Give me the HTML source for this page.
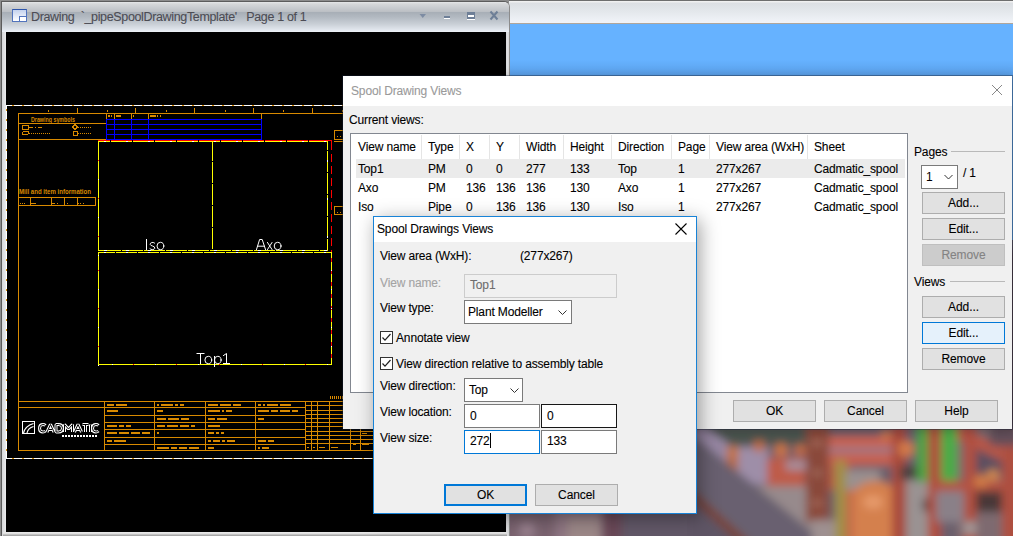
<!DOCTYPE html>
<html><head><meta charset="utf-8">
<style>
html,body{margin:0;padding:0}
body{width:1013px;height:536px;overflow:hidden;position:relative;background:#66b2ff;font-family:"Liberation Sans",sans-serif;font-size:12px;color:#000}
.a{position:absolute;box-sizing:border-box}
.t{position:absolute;white-space:pre;line-height:15px;letter-spacing:-0.15px;-webkit-text-stroke:0.1px currentColor}
.btn{position:absolute;box-sizing:border-box;background:#e1e1e1;border:1px solid #adadad;text-align:center;line-height:21px;white-space:pre;letter-spacing:-0.1px;-webkit-text-stroke:0.1px currentColor}
.tb{position:absolute;box-sizing:border-box;background:#fff;border:1px solid #7a7a7a;white-space:pre;line-height:20px;padding-left:5px}
</style></head><body>

<!-- desktop top strip -->
<div class="a" style="left:509px;top:0;width:504px;height:24px;background:linear-gradient(#6e6e6e 0,#6e6e6e 1px,#f0f0f0 1px,#f0f0f0 2px,#dcdfe3 3px,#e4e8ec 12px,#f0f3f8 22px,#f0f3f8 23px,#b0a69c 23px,#b0a69c 24px)"></div>
<!-- blue shadow above main dialog -->
<div class="a" style="left:509px;top:60px;width:504px;height:16px;background:linear-gradient(rgba(0,0,60,0),rgba(0,20,60,0.12))"></div>

<!-- 3D render -->
<svg id="render" class="a" style="left:509px;top:240px" width="504" height="296" viewBox="509 240 504 296"><defs><filter id="bl" filterUnits="userSpaceOnUse" x="470" y="210" width="600" height="380"><feGaussianBlur stdDeviation="4"/></filter></defs><g filter="url(#bl)">
<rect x="480" y="220" width="580" height="360" fill="#6a5e6c"/>
<rect x="1000" y="250" width="40" height="180" fill="#5a4248"/>
<rect x="500" y="505" width="55" height="55" fill="#7a6470"/>
<circle cx="527" cy="530" r="8" fill="#98808e"/>
<rect x="555" y="505" width="47" height="55" fill="#8e7682"/>
<rect x="568" y="518" width="32" height="42" fill="#9c8888"/>
<rect x="602" y="505" width="20" height="55" fill="#6a4a58"/>
<rect x="622" y="505" width="78" height="55" fill="#625868"/>
<rect x="690" y="425" width="140" height="21" fill="#4b5550"/>
<polygon points="690,425 703,425 730,445 730,475 690,450" fill="#9686a2"/>
<rect x="734" y="447" width="34" height="37" fill="#9e8ea8"/>
<rect x="727" y="446" width="11" height="30" fill="#b86a40"/>
<circle cx="733" cy="452" r="6" fill="#c47446"/>
<circle cx="759" cy="446" r="6" fill="#c06a40"/>
<circle cx="781" cy="450" r="7" fill="#cc7444"/>
<circle cx="800" cy="450" r="6" fill="#c46c44"/>
<rect x="767" y="458" width="38" height="28" fill="#be5c4a"/>
<rect x="786" y="461" width="20" height="9" fill="#a4909e"/>
<polygon points="740,486 812,486 836,560 812,560" fill="#978a8c"/>
<polygon points="690,433 847,560 766,560 690,491" fill="#696070"/>
<polygon points="690,488 770,560 758,560 690,498" fill="#7a4232"/>
<polygon points="690,498 758,560 690,560" fill="#5f5565"/>
<rect x="806" y="425" width="23" height="97" fill="#8a4a3a"/>
<rect x="812" y="440" width="10" height="6" fill="#a06858"/>
<rect x="812" y="470" width="10" height="6" fill="#a06858"/>
<rect x="812" y="500" width="10" height="6" fill="#a06858"/>
<rect x="812" y="520" width="30" height="40" fill="#9e9090"/>
<rect x="829" y="436" width="63" height="11" fill="#c86050"/>
<rect x="829" y="447" width="63" height="6" fill="#9a7a88"/>
<rect x="829" y="453" width="63" height="12" fill="#c86050"/>
<rect x="829" y="465" width="21" height="25" fill="#b85a48"/>
<rect x="835" y="460" width="11" height="100" fill="#a09046"/>
<rect x="846" y="470" width="34" height="22" fill="#9a9090"/>
<rect x="846" y="490" width="10" height="70" fill="#c46848"/>
<rect x="853" y="494" width="45" height="66" fill="#d4804e"/>
<ellipse cx="875.5" cy="496" rx="22.5" ry="15" fill="#d4804e"/>
<ellipse cx="873" cy="502" rx="10" ry="7" fill="#e69a6a"/>
<rect x="892" y="425" width="14" height="135" fill="#a84a3a"/>
<circle cx="886" cy="435" r="5" fill="#cc7848"/>
<circle cx="906" cy="449" r="8" fill="#d47a48"/>
<rect x="900" y="466" width="18" height="14" fill="#4a4040"/>
<rect x="906" y="480" width="30" height="80" fill="#9a9292"/>
<circle cx="930" cy="505" r="8" fill="#4e4444"/>
<rect x="917" y="425" width="11" height="57" fill="#48a444"/>
<rect x="941" y="425" width="16" height="57" fill="#4aac46"/>
<rect x="928" y="425" width="13" height="135" fill="#b04e3e"/>
<rect x="957" y="425" width="83" height="135" fill="#7e6a70"/>
<rect x="975" y="438" width="27" height="38" fill="#5c5060"/>
<polygon points="957,425 1040,466 1040,480 957,439" fill="#b85646"/>
<rect x="964" y="425" width="12" height="135" fill="#b05040"/>
<rect x="936" y="481" width="104" height="10" fill="#b45242"/>
<rect x="976" y="491" width="26" height="21" fill="#4a3838"/>
<rect x="936" y="491" width="28" height="31" fill="#8a8088"/>
<circle cx="970" cy="528" r="7" fill="#a09898"/>
<circle cx="981" cy="481" r="7" fill="#d07c44"/>
<circle cx="993" cy="475" r="6" fill="#d48a4c"/>
<rect x="1002" y="445" width="38" height="115" fill="#ae5040"/>
<rect x="990" y="425" width="50" height="21" fill="#64505a"/>
</g></svg>

<!-- drawing window -->
<div class="a" style="left:0;top:0;width:509px;height:536px;background:#8c8c8c"></div>
<div id="dw" class="a" style="left:1px;top:1px;width:509px;height:540px;border:1px solid #5c5c5c;border-right-color:#8c8c8c;border-top-right-radius:6px;background:linear-gradient(90deg,#d6d7d9,#e9eaec 4px,#d3d5d8 5px,#d3d5d8 503px,#e0e1e3 506px,#c0c0c0 508px)">
  <div class="a" style="left:0;top:0;width:507px;height:30px;border-top-right-radius:5px;background:linear-gradient(#e6e7e8 0,#d5d7d9 2px,#bcc0c5 9.5px,#a8afb7 10.5px,#b2b9c1 15px,#c9cfd6 22px,#e2e7ee 28px,#edf1f6 30px)"></div>
</div>
<div class="a" style="left:3px;top:532px;width:504px;height:4px;background:linear-gradient(#ebebeb,#dcdcdc 2px,#a8a8a8 3px,#a8a8a8 4px)"></div>
<!-- title icon -->
<div class="a" style="left:12px;top:9px;width:15px;height:13px;border:1px solid #5274bd;border-top-color:#2d55aa;background:linear-gradient(#c4d2ee,#ffffff)"></div>
<div class="a" style="left:19px;top:16px;width:8px;height:6px;border:1px solid #5274bd;background:#fff"></div>
<div class="t" style="left:31px;top:10px;color:#4c4c54;font-size:12.5px;letter-spacing:-0.35px">Drawing  `_pipeSpoolDrawingTemplate'   Page 1 of 1</div>
<!-- title buttons -->
<svg class="a" style="left:410px;top:5px" width="100" height="25" viewBox="410 5 100 25">
  <path d="M419.5 14 L426 14 L422.75 18 Z" fill="#7d8ca3"/>
  <rect x="444" y="16" width="6" height="2" fill="#6e7f97"/><rect x="444" y="18" width="6" height="1" fill="#fff"/>
  <rect x="467" y="12" width="8" height="7" fill="#6e7f97"/><rect x="468" y="15" width="6" height="2" fill="#fff"/><rect x="467" y="19" width="8" height="1" fill="#fff"/>
  <path d="M490.5 11.5 L497.5 19.5 M497.5 11.5 L490.5 19.5" stroke="#6e7f97" stroke-width="2"/>
</svg>
<!-- canvas -->
<div class="a" style="left:6px;top:32px;width:500px;height:500px;background:#000"></div>
<svg id="cad" class="a" style="left:6px;top:32px" width="500" height="500" viewBox="6 32 500 500" shape-rendering="crispEdges">
<rect x="6" y="105" width="500" height="1" fill="#ffffff"/>
<rect x="12" y="105" width="2" height="1" fill="#d98a00"/>
<rect x="22" y="105" width="2" height="1" fill="#d98a00"/>
<rect x="32" y="105" width="2" height="1" fill="#d98a00"/>
<rect x="42" y="105" width="2" height="1" fill="#d98a00"/>
<rect x="52" y="105" width="2" height="1" fill="#d98a00"/>
<rect x="62" y="105" width="2" height="1" fill="#d98a00"/>
<rect x="72" y="105" width="2" height="1" fill="#d98a00"/>
<rect x="82" y="105" width="2" height="1" fill="#d98a00"/>
<rect x="92" y="105" width="2" height="1" fill="#d98a00"/>
<rect x="102" y="105" width="2" height="1" fill="#d98a00"/>
<rect x="112" y="105" width="2" height="1" fill="#d98a00"/>
<rect x="122" y="105" width="2" height="1" fill="#d98a00"/>
<rect x="132" y="105" width="2" height="1" fill="#d98a00"/>
<rect x="142" y="105" width="2" height="1" fill="#d98a00"/>
<rect x="152" y="105" width="2" height="1" fill="#d98a00"/>
<rect x="162" y="105" width="2" height="1" fill="#d98a00"/>
<rect x="172" y="105" width="2" height="1" fill="#d98a00"/>
<rect x="182" y="105" width="2" height="1" fill="#d98a00"/>
<rect x="192" y="105" width="2" height="1" fill="#d98a00"/>
<rect x="202" y="105" width="2" height="1" fill="#d98a00"/>
<rect x="212" y="105" width="2" height="1" fill="#d98a00"/>
<rect x="222" y="105" width="2" height="1" fill="#d98a00"/>
<rect x="232" y="105" width="2" height="1" fill="#d98a00"/>
<rect x="242" y="105" width="2" height="1" fill="#d98a00"/>
<rect x="252" y="105" width="2" height="1" fill="#d98a00"/>
<rect x="262" y="105" width="2" height="1" fill="#d98a00"/>
<rect x="272" y="105" width="2" height="1" fill="#d98a00"/>
<rect x="282" y="105" width="2" height="1" fill="#d98a00"/>
<rect x="292" y="105" width="2" height="1" fill="#d98a00"/>
<rect x="302" y="105" width="2" height="1" fill="#d98a00"/>
<rect x="312" y="105" width="2" height="1" fill="#d98a00"/>
<rect x="322" y="105" width="2" height="1" fill="#d98a00"/>
<rect x="332" y="105" width="2" height="1" fill="#d98a00"/>
<rect x="342" y="105" width="2" height="1" fill="#d98a00"/>
<rect x="352" y="105" width="2" height="1" fill="#d98a00"/>
<rect x="362" y="105" width="2" height="1" fill="#d98a00"/>
<rect x="372" y="105" width="2" height="1" fill="#d98a00"/>
<rect x="382" y="105" width="2" height="1" fill="#d98a00"/>
<rect x="392" y="105" width="2" height="1" fill="#d98a00"/>
<rect x="402" y="105" width="2" height="1" fill="#d98a00"/>
<rect x="412" y="105" width="2" height="1" fill="#d98a00"/>
<rect x="422" y="105" width="2" height="1" fill="#d98a00"/>
<rect x="432" y="105" width="2" height="1" fill="#d98a00"/>
<rect x="442" y="105" width="2" height="1" fill="#d98a00"/>
<rect x="452" y="105" width="2" height="1" fill="#d98a00"/>
<rect x="462" y="105" width="2" height="1" fill="#d98a00"/>
<rect x="472" y="105" width="2" height="1" fill="#d98a00"/>
<rect x="482" y="105" width="2" height="1" fill="#d98a00"/>
<rect x="492" y="105" width="2" height="1" fill="#d98a00"/>
<rect x="502" y="105" width="2" height="1" fill="#d98a00"/>
<rect x="6" y="458" width="500" height="1" fill="#ffffff"/>
<rect x="12" y="458" width="2" height="1" fill="#d98a00"/>
<rect x="22" y="458" width="2" height="1" fill="#d98a00"/>
<rect x="32" y="458" width="2" height="1" fill="#d98a00"/>
<rect x="42" y="458" width="2" height="1" fill="#d98a00"/>
<rect x="52" y="458" width="2" height="1" fill="#d98a00"/>
<rect x="62" y="458" width="2" height="1" fill="#d98a00"/>
<rect x="72" y="458" width="2" height="1" fill="#d98a00"/>
<rect x="82" y="458" width="2" height="1" fill="#d98a00"/>
<rect x="92" y="458" width="2" height="1" fill="#d98a00"/>
<rect x="102" y="458" width="2" height="1" fill="#d98a00"/>
<rect x="112" y="458" width="2" height="1" fill="#d98a00"/>
<rect x="122" y="458" width="2" height="1" fill="#d98a00"/>
<rect x="132" y="458" width="2" height="1" fill="#d98a00"/>
<rect x="142" y="458" width="2" height="1" fill="#d98a00"/>
<rect x="152" y="458" width="2" height="1" fill="#d98a00"/>
<rect x="162" y="458" width="2" height="1" fill="#d98a00"/>
<rect x="172" y="458" width="2" height="1" fill="#d98a00"/>
<rect x="182" y="458" width="2" height="1" fill="#d98a00"/>
<rect x="192" y="458" width="2" height="1" fill="#d98a00"/>
<rect x="202" y="458" width="2" height="1" fill="#d98a00"/>
<rect x="212" y="458" width="2" height="1" fill="#d98a00"/>
<rect x="222" y="458" width="2" height="1" fill="#d98a00"/>
<rect x="232" y="458" width="2" height="1" fill="#d98a00"/>
<rect x="242" y="458" width="2" height="1" fill="#d98a00"/>
<rect x="252" y="458" width="2" height="1" fill="#d98a00"/>
<rect x="262" y="458" width="2" height="1" fill="#d98a00"/>
<rect x="272" y="458" width="2" height="1" fill="#d98a00"/>
<rect x="282" y="458" width="2" height="1" fill="#d98a00"/>
<rect x="292" y="458" width="2" height="1" fill="#d98a00"/>
<rect x="302" y="458" width="2" height="1" fill="#d98a00"/>
<rect x="312" y="458" width="2" height="1" fill="#d98a00"/>
<rect x="322" y="458" width="2" height="1" fill="#d98a00"/>
<rect x="332" y="458" width="2" height="1" fill="#d98a00"/>
<rect x="342" y="458" width="2" height="1" fill="#d98a00"/>
<rect x="352" y="458" width="2" height="1" fill="#d98a00"/>
<rect x="362" y="458" width="2" height="1" fill="#d98a00"/>
<rect x="372" y="458" width="2" height="1" fill="#d98a00"/>
<rect x="382" y="458" width="2" height="1" fill="#d98a00"/>
<rect x="392" y="458" width="2" height="1" fill="#d98a00"/>
<rect x="402" y="458" width="2" height="1" fill="#d98a00"/>
<rect x="412" y="458" width="2" height="1" fill="#d98a00"/>
<rect x="422" y="458" width="2" height="1" fill="#d98a00"/>
<rect x="432" y="458" width="2" height="1" fill="#d98a00"/>
<rect x="442" y="458" width="2" height="1" fill="#d98a00"/>
<rect x="452" y="458" width="2" height="1" fill="#d98a00"/>
<rect x="462" y="458" width="2" height="1" fill="#d98a00"/>
<rect x="472" y="458" width="2" height="1" fill="#d98a00"/>
<rect x="482" y="458" width="2" height="1" fill="#d98a00"/>
<rect x="492" y="458" width="2" height="1" fill="#d98a00"/>
<rect x="502" y="458" width="2" height="1" fill="#d98a00"/>
<rect x="6" y="105" width="1" height="354" fill="#ffffff"/>
<rect x="6" y="109" width="1" height="2" fill="#d98a00"/>
<rect x="6" y="119" width="1" height="2" fill="#d98a00"/>
<rect x="6" y="129" width="1" height="2" fill="#d98a00"/>
<rect x="6" y="139" width="1" height="2" fill="#d98a00"/>
<rect x="6" y="149" width="1" height="2" fill="#d98a00"/>
<rect x="6" y="159" width="1" height="2" fill="#d98a00"/>
<rect x="6" y="169" width="1" height="2" fill="#d98a00"/>
<rect x="6" y="179" width="1" height="2" fill="#d98a00"/>
<rect x="6" y="189" width="1" height="2" fill="#d98a00"/>
<rect x="6" y="199" width="1" height="2" fill="#d98a00"/>
<rect x="6" y="209" width="1" height="2" fill="#d98a00"/>
<rect x="6" y="219" width="1" height="2" fill="#d98a00"/>
<rect x="6" y="229" width="1" height="2" fill="#d98a00"/>
<rect x="6" y="239" width="1" height="2" fill="#d98a00"/>
<rect x="6" y="249" width="1" height="2" fill="#d98a00"/>
<rect x="6" y="259" width="1" height="2" fill="#d98a00"/>
<rect x="6" y="269" width="1" height="2" fill="#d98a00"/>
<rect x="6" y="279" width="1" height="2" fill="#d98a00"/>
<rect x="6" y="289" width="1" height="2" fill="#d98a00"/>
<rect x="6" y="299" width="1" height="2" fill="#d98a00"/>
<rect x="6" y="309" width="1" height="2" fill="#d98a00"/>
<rect x="6" y="319" width="1" height="2" fill="#d98a00"/>
<rect x="6" y="329" width="1" height="2" fill="#d98a00"/>
<rect x="6" y="339" width="1" height="2" fill="#d98a00"/>
<rect x="6" y="349" width="1" height="2" fill="#d98a00"/>
<rect x="6" y="359" width="1" height="2" fill="#d98a00"/>
<rect x="6" y="369" width="1" height="2" fill="#d98a00"/>
<rect x="6" y="379" width="1" height="2" fill="#d98a00"/>
<rect x="6" y="389" width="1" height="2" fill="#d98a00"/>
<rect x="6" y="399" width="1" height="2" fill="#d98a00"/>
<rect x="6" y="409" width="1" height="2" fill="#d98a00"/>
<rect x="6" y="419" width="1" height="2" fill="#d98a00"/>
<rect x="6" y="429" width="1" height="2" fill="#d98a00"/>
<rect x="6" y="439" width="1" height="2" fill="#d98a00"/>
<rect x="6" y="449" width="1" height="2" fill="#d98a00"/>
<rect x="18" y="113" width="362" height="1" fill="#d98a00"/>
<rect x="18" y="113" width="1" height="338" fill="#d98a00"/>
<rect x="18" y="450" width="362" height="1" fill="#d98a00"/>
<rect x="77" y="108" width="1" height="5" fill="#d98a00"/>
<rect x="135" y="108" width="1" height="5" fill="#d98a00"/>
<rect x="194" y="108" width="1" height="5" fill="#d98a00"/>
<rect x="253" y="108" width="1" height="5" fill="#d98a00"/>
<rect x="312" y="108" width="1" height="5" fill="#d98a00"/>
<rect x="371" y="108" width="1" height="5" fill="#d98a00"/>
<rect x="48" y="110" width="1" height="2" fill="#d98a00"/>
<rect x="107" y="110" width="1" height="2" fill="#d98a00"/>
<rect x="166" y="110" width="1" height="2" fill="#d98a00"/>
<rect x="225" y="110" width="1" height="2" fill="#d98a00"/>
<rect x="283" y="110" width="1" height="2" fill="#d98a00"/>
<rect x="342" y="110" width="1" height="2" fill="#d98a00"/>
<rect x="18" y="123" width="88" height="1" fill="#d98a00"/>
<rect x="18" y="139" width="88" height="1" fill="#d98a00"/>
<rect x="106" y="113" width="1" height="27" fill="#d98a00"/>
<text x="31" y="121.5" font-family="Liberation Sans" font-size="7.5" font-weight="bold" fill="#d98a00" textLength="44" lengthAdjust="spacingAndGlyphs" shape-rendering="auto">Drawing symbols</text>
<rect x="22.5" y="125.5" width="6" height="4" fill="none" stroke="#d98a00" stroke-width="1"/>
<rect x="29" y="127" width="4" height="1" fill="#d98a00"/>
<rect x="35" y="127" width="1" height="1" fill="#d98a00"/>
<rect x="38" y="127" width="4" height="1" fill="#d98a00"/>
<rect x="22.5" y="131.5" width="6" height="3" rx="1.5" fill="none" stroke="#d98a00" stroke-width="1"/>
<rect x="29" y="133" width="1" height="1" fill="#d98a00"/>
<rect x="31" y="133" width="1" height="1" fill="#d98a00"/>
<rect x="33" y="133" width="1" height="1" fill="#d98a00"/>
<rect x="35" y="133" width="1" height="1" fill="#d98a00"/>
<rect x="37" y="133" width="1" height="1" fill="#d98a00"/>
<rect x="39" y="133" width="1" height="1" fill="#d98a00"/>
<rect x="41" y="133" width="1" height="1" fill="#d98a00"/>
<rect x="43" y="133" width="1" height="1" fill="#d98a00"/>
<rect x="45" y="133" width="1" height="1" fill="#d98a00"/>
<rect x="47" y="133" width="1" height="1" fill="#d98a00"/>
<rect x="49" y="133" width="1" height="1" fill="#d98a00"/>
<path d="M75 124.5 L77.5 127 L75 129.5 L72.5 127 Z" fill="none" stroke="#d98a00" stroke-width="1"/>
<rect x="78" y="127" width="1" height="1" fill="#d98a00"/>
<rect x="80" y="127" width="1" height="1" fill="#d98a00"/>
<rect x="82" y="127" width="1" height="1" fill="#d98a00"/>
<rect x="84" y="127" width="1" height="1" fill="#d98a00"/>
<rect x="86" y="127" width="1" height="1" fill="#d98a00"/>
<rect x="88" y="127" width="1" height="1" fill="#d98a00"/>
<rect x="90" y="127" width="1" height="1" fill="#d98a00"/>
<rect x="73.5" y="131.5" width="4" height="4" fill="none" stroke="#d98a00" stroke-width="1"/>
<rect x="78" y="133" width="1" height="1" fill="#d98a00"/>
<rect x="80" y="133" width="1" height="1" fill="#d98a00"/>
<rect x="82" y="133" width="1" height="1" fill="#d98a00"/>
<rect x="84" y="133" width="1" height="1" fill="#d98a00"/>
<rect x="86" y="133" width="1" height="1" fill="#d98a00"/>
<rect x="88" y="133" width="1" height="1" fill="#d98a00"/>
<rect x="90" y="133" width="1" height="1" fill="#d98a00"/>
<rect x="106" y="119" width="156" height="1" fill="#0000ff"/>
<rect x="106" y="124" width="156" height="1" fill="#0000ff"/>
<rect x="106" y="129" width="156" height="1" fill="#0000ff"/>
<rect x="106" y="134" width="156" height="1" fill="#0000ff"/>
<rect x="106" y="139" width="156" height="1" fill="#0000ff"/>
<rect x="106" y="119" width="1" height="21" fill="#0000ff"/>
<rect x="114" y="119" width="1" height="21" fill="#0000ff"/>
<rect x="131" y="119" width="1" height="21" fill="#0000ff"/>
<rect x="148" y="119" width="1" height="21" fill="#0000ff"/>
<rect x="261" y="119" width="1" height="21" fill="#0000ff"/>
<rect x="114" y="113" width="1" height="6" fill="#d98a00"/>
<rect x="131" y="113" width="1" height="6" fill="#d98a00"/>
<rect x="148" y="113" width="1" height="6" fill="#d98a00"/>
<rect x="261" y="113" width="1" height="6" fill="#d98a00"/>
<rect x="108" y="115" width="2" height="2" fill="#d98a00"/>
<rect x="111" y="115" width="1" height="2" fill="#d98a00"/>
<rect x="116" y="115" width="5" height="2" fill="#d98a00"/>
<rect x="133" y="115" width="1" height="2" fill="#d98a00"/>
<rect x="150" y="115" width="6" height="2" fill="#d98a00"/>
<rect x="157" y="115" width="1" height="2" fill="#d98a00"/>
<rect x="160" y="115" width="1" height="2" fill="#d98a00"/>
<text x="19" y="193.5" font-family="Liberation Sans" font-size="7" font-weight="bold" fill="#d98a00" textLength="72" lengthAdjust="spacingAndGlyphs" shape-rendering="auto">Mill and item information</text>
<rect x="18.5" y="197.5" width="77" height="8" fill="none" stroke="#d98a00" stroke-width="1"/>
<rect x="30" y="197" width="1" height="9" fill="#d98a00"/>
<rect x="51" y="197" width="1" height="9" fill="#d98a00"/>
<rect x="64" y="197" width="1" height="9" fill="#d98a00"/>
<rect x="77" y="197" width="1" height="9" fill="#d98a00"/>
<rect x="20" y="203" width="1" height="1" fill="#d98a00"/>
<rect x="22" y="203" width="1" height="1" fill="#d98a00"/>
<rect x="24" y="203" width="1" height="1" fill="#d98a00"/>
<rect x="31" y="203" width="5" height="1" fill="#d98a00"/>
<rect x="52" y="203" width="3" height="1" fill="#d98a00"/>
<rect x="57" y="203" width="1" height="1" fill="#d98a00"/>
<rect x="67" y="203" width="1" height="1" fill="#d98a00"/>
<rect x="78" y="203" width="1" height="1" fill="#d98a00"/>
<rect x="80" y="203" width="1" height="1" fill="#d98a00"/>
<rect x="83" y="203" width="1" height="1" fill="#d98a00"/>
<rect x="98" y="140" width="234" height="1" fill="#ff0000"/>
<rect x="331" y="140" width="1" height="225" fill="#ff0000"/>
<rect x="98" y="141" width="115" height="1" fill="#ffff00"/>
<rect x="98" y="250" width="115" height="1" fill="#ffff00"/>
<rect x="98" y="141" width="1" height="110" fill="#ffff00"/>
<rect x="212" y="141" width="1" height="110" fill="#ffff00"/>
<rect x="212" y="141" width="116" height="1" fill="#ffff00"/>
<rect x="212" y="250" width="116" height="1" fill="#ffff00"/>
<rect x="212" y="141" width="1" height="110" fill="#ffff00"/>
<rect x="327" y="141" width="1" height="110" fill="#ffff00"/>
<rect x="98" y="252" width="234" height="1" fill="#ffff00"/>
<rect x="98" y="364" width="234" height="1" fill="#ffff00"/>
<rect x="98" y="252" width="1" height="113" fill="#ffff00"/>
<rect x="331" y="252" width="1" height="113" fill="#ffff00"/>
<rect x="110" y="140" width="1" height="2" fill="#000"/>
<rect x="121" y="250" width="1" height="1" fill="#000"/>
<rect x="115" y="252" width="1" height="1" fill="#000"/>
<rect x="132" y="140" width="1" height="2" fill="#000"/>
<rect x="143" y="250" width="1" height="1" fill="#000"/>
<rect x="137" y="252" width="1" height="1" fill="#000"/>
<rect x="154" y="140" width="1" height="2" fill="#000"/>
<rect x="165" y="250" width="1" height="1" fill="#000"/>
<rect x="159" y="252" width="1" height="1" fill="#000"/>
<rect x="176" y="140" width="1" height="2" fill="#000"/>
<rect x="187" y="250" width="1" height="1" fill="#000"/>
<rect x="181" y="252" width="1" height="1" fill="#000"/>
<rect x="198" y="140" width="1" height="2" fill="#000"/>
<rect x="209" y="250" width="1" height="1" fill="#000"/>
<rect x="203" y="252" width="1" height="1" fill="#000"/>
<rect x="220" y="140" width="1" height="2" fill="#000"/>
<rect x="231" y="250" width="1" height="1" fill="#000"/>
<rect x="225" y="252" width="1" height="1" fill="#000"/>
<rect x="242" y="140" width="1" height="2" fill="#000"/>
<rect x="253" y="250" width="1" height="1" fill="#000"/>
<rect x="247" y="252" width="1" height="1" fill="#000"/>
<rect x="264" y="140" width="1" height="2" fill="#000"/>
<rect x="275" y="250" width="1" height="1" fill="#000"/>
<rect x="269" y="252" width="1" height="1" fill="#000"/>
<rect x="286" y="140" width="1" height="2" fill="#000"/>
<rect x="297" y="250" width="1" height="1" fill="#000"/>
<rect x="291" y="252" width="1" height="1" fill="#000"/>
<rect x="308" y="140" width="1" height="2" fill="#000"/>
<rect x="319" y="250" width="1" height="1" fill="#000"/>
<rect x="313" y="252" width="1" height="1" fill="#000"/>
<rect x="327" y="150" width="1" height="1" fill="#000"/>
<rect x="212" y="161" width="1" height="1" fill="#000"/>
<rect x="327" y="172" width="1" height="1" fill="#000"/>
<rect x="212" y="183" width="1" height="1" fill="#000"/>
<rect x="327" y="194" width="1" height="1" fill="#000"/>
<rect x="212" y="205" width="1" height="1" fill="#000"/>
<rect x="327" y="216" width="1" height="1" fill="#000"/>
<rect x="212" y="227" width="1" height="1" fill="#000"/>
<rect x="327" y="238" width="1" height="1" fill="#000"/>
<rect x="212" y="249" width="1" height="1" fill="#000"/>
<rect x="104" y="141" width="2" height="1" fill="#ffffff"/>
<rect x="104" y="250" width="3" height="1" fill="#ffffff"/>
<rect x="104" y="252" width="2" height="1" fill="#ffffff"/>
<rect x="126" y="141" width="2" height="1" fill="#ffffff"/>
<rect x="126" y="250" width="3" height="1" fill="#ffffff"/>
<rect x="126" y="252" width="2" height="1" fill="#ffffff"/>
<rect x="148" y="141" width="2" height="1" fill="#ffffff"/>
<rect x="148" y="250" width="3" height="1" fill="#ffffff"/>
<rect x="148" y="252" width="2" height="1" fill="#ffffff"/>
<rect x="170" y="141" width="2" height="1" fill="#ffffff"/>
<rect x="170" y="250" width="3" height="1" fill="#ffffff"/>
<rect x="170" y="252" width="2" height="1" fill="#ffffff"/>
<rect x="192" y="141" width="2" height="1" fill="#ffffff"/>
<rect x="192" y="250" width="3" height="1" fill="#ffffff"/>
<rect x="192" y="252" width="2" height="1" fill="#ffffff"/>
<rect x="214" y="141" width="2" height="1" fill="#ffffff"/>
<rect x="214" y="250" width="3" height="1" fill="#ffffff"/>
<rect x="214" y="252" width="2" height="1" fill="#ffffff"/>
<rect x="236" y="141" width="2" height="1" fill="#ffffff"/>
<rect x="236" y="250" width="3" height="1" fill="#ffffff"/>
<rect x="236" y="252" width="2" height="1" fill="#ffffff"/>
<rect x="258" y="141" width="2" height="1" fill="#ffffff"/>
<rect x="258" y="250" width="3" height="1" fill="#ffffff"/>
<rect x="258" y="252" width="2" height="1" fill="#ffffff"/>
<rect x="280" y="141" width="2" height="1" fill="#ffffff"/>
<rect x="280" y="250" width="3" height="1" fill="#ffffff"/>
<rect x="280" y="252" width="2" height="1" fill="#ffffff"/>
<rect x="302" y="141" width="2" height="1" fill="#ffffff"/>
<rect x="302" y="250" width="3" height="1" fill="#ffffff"/>
<rect x="302" y="252" width="2" height="1" fill="#ffffff"/>
<rect x="324" y="141" width="2" height="1" fill="#ffffff"/>
<rect x="324" y="250" width="3" height="1" fill="#ffffff"/>
<rect x="324" y="252" width="2" height="1" fill="#ffffff"/>
<rect x="112" y="364" width="1" height="1" fill="#ffffff"/>
<rect x="133" y="364" width="1" height="1" fill="#ff0000"/>
<rect x="155" y="364" width="1" height="1" fill="#ffffff"/>
<rect x="176" y="364" width="1" height="1" fill="#ff0000"/>
<rect x="198" y="364" width="1" height="1" fill="#ffffff"/>
<rect x="219" y="364" width="1" height="1" fill="#ff0000"/>
<rect x="241" y="364" width="1" height="1" fill="#ffffff"/>
<rect x="262" y="364" width="1" height="1" fill="#ff0000"/>
<rect x="284" y="364" width="1" height="1" fill="#ffffff"/>
<rect x="305" y="364" width="1" height="1" fill="#ff0000"/>
<rect x="327" y="364" width="1" height="1" fill="#ffffff"/>
<rect x="348" y="364" width="1" height="1" fill="#ff0000"/>
<rect x="98" y="160" width="1" height="1" fill="#ff0000"/>
<rect x="98" y="179" width="1" height="1" fill="#ffffff"/>
<rect x="98" y="198" width="1" height="1" fill="#ff0000"/>
<rect x="98" y="217" width="1" height="1" fill="#ffffff"/>
<rect x="98" y="236" width="1" height="1" fill="#ff0000"/>
<rect x="98" y="255" width="1" height="1" fill="#ffffff"/>
<rect x="98" y="270" width="1" height="1" fill="#ff0000"/>
<rect x="98" y="289" width="1" height="1" fill="#ffffff"/>
<rect x="98" y="308" width="1" height="1" fill="#ff0000"/>
<rect x="98" y="327" width="1" height="1" fill="#ffffff"/>
<rect x="98" y="346" width="1" height="1" fill="#ff0000"/>
<rect x="98" y="365" width="1" height="1" fill="#ffffff"/>
<rect x="331" y="150" width="1" height="4" fill="#000"/>
<rect x="331" y="162" width="1" height="4" fill="#000"/>
<rect x="331" y="174" width="1" height="4" fill="#000"/>
<rect x="331" y="186" width="1" height="4" fill="#000"/>
<rect x="331" y="198" width="1" height="4" fill="#000"/>
<rect x="331" y="210" width="1" height="4" fill="#000"/>
<rect x="331" y="222" width="1" height="4" fill="#000"/>
<rect x="331" y="234" width="1" height="4" fill="#000"/>
<rect x="331" y="246" width="1" height="4" fill="#000"/>
<rect x="331" y="258" width="1" height="4" fill="#ff0000"/>
<rect x="331" y="270" width="1" height="4" fill="#ff0000"/>
<rect x="331" y="282" width="1" height="4" fill="#ff0000"/>
<rect x="331" y="294" width="1" height="4" fill="#ff0000"/>
<rect x="331" y="306" width="1" height="4" fill="#ff0000"/>
<rect x="331" y="318" width="1" height="4" fill="#ff0000"/>
<rect x="331" y="330" width="1" height="4" fill="#ff0000"/>
<rect x="331" y="342" width="1" height="4" fill="#ff0000"/>
<rect x="331" y="354" width="1" height="4" fill="#ff0000"/>
<rect x="327" y="160" width="1" height="2" fill="#ffffff"/>
<rect x="327" y="198" width="1" height="2" fill="#ffffff"/>
<rect x="327" y="236" width="1" height="2" fill="#ffffff"/>
<rect x="331" y="270" width="1" height="1" fill="#ffffff"/>
<rect x="331" y="289" width="1" height="1" fill="#ffffff"/>
<rect x="331" y="308" width="1" height="1" fill="#ffffff"/>
<rect x="331" y="327" width="1" height="1" fill="#ffffff"/>
<rect x="331" y="346" width="1" height="1" fill="#ffffff"/>
<rect x="334.5" y="130.5" width="9" height="9" fill="none" stroke="#d98a00" stroke-width="1"/>
<rect x="337" y="136" width="1" height="1" fill="#d98a00"/>
<rect x="340" y="136" width="1" height="1" fill="#d98a00"/>
<rect x="334" y="141" width="11" height="1" fill="#d98a00"/>
<rect x="334.5" y="206.5" width="9" height="8" fill="none" stroke="#d98a00" stroke-width="1"/>
<rect x="337" y="212" width="1" height="1" fill="#d98a00"/>
<rect x="340" y="212" width="1" height="1" fill="#d98a00"/>
<rect x="18" y="401" width="362" height="1" fill="#d98a00"/>
<rect x="18" y="407" width="287" height="1" fill="#d98a00"/>
<rect x="104" y="415" width="201" height="1" fill="#d98a00"/>
<rect x="104" y="422" width="201" height="1" fill="#d98a00"/>
<rect x="104" y="429" width="201" height="1" fill="#d98a00"/>
<rect x="104" y="437" width="201" height="1" fill="#d98a00"/>
<rect x="104" y="444" width="201" height="1" fill="#d98a00"/>
<rect x="104" y="401" width="1" height="50" fill="#d98a00"/>
<rect x="154" y="401" width="1" height="50" fill="#d98a00"/>
<rect x="205" y="401" width="1" height="50" fill="#d98a00"/>
<rect x="255" y="401" width="1" height="50" fill="#d98a00"/>
<rect x="305" y="401" width="1" height="50" fill="#d98a00"/>
<rect x="311" y="401" width="1" height="50" fill="#d98a00"/>
<rect x="317" y="401" width="1" height="50" fill="#d98a00"/>
<rect x="329" y="401" width="1" height="50" fill="#d98a00"/>
<rect x="350" y="401" width="1" height="50" fill="#d98a00"/>
<rect x="360" y="401" width="1" height="50" fill="#d98a00"/>
<rect x="305" y="405" width="75" height="1" fill="#d98a00"/>
<rect x="305" y="410" width="75" height="1" fill="#d98a00"/>
<rect x="305" y="414" width="75" height="1" fill="#d98a00"/>
<rect x="305" y="418" width="75" height="1" fill="#d98a00"/>
<rect x="305" y="422" width="75" height="1" fill="#d98a00"/>
<rect x="305" y="426" width="75" height="1" fill="#d98a00"/>
<rect x="305" y="431" width="75" height="1" fill="#d98a00"/>
<rect x="305" y="435" width="75" height="1" fill="#d98a00"/>
<rect x="305" y="439" width="75" height="1" fill="#d98a00"/>
<rect x="305" y="443" width="75" height="1" fill="#d98a00"/>
<rect x="107" y="404" width="7" height="2" fill="#d98a00"/>
<rect x="116" y="404" width="11" height="2" fill="#d98a00"/>
<rect x="107" y="410" width="11" height="2" fill="#d98a00"/>
<rect x="107" y="425" width="10" height="2" fill="#d98a00"/>
<rect x="119" y="425" width="5" height="2" fill="#d98a00"/>
<rect x="126" y="425" width="5" height="2" fill="#d98a00"/>
<rect x="107" y="432" width="10" height="2" fill="#d98a00"/>
<rect x="119" y="432" width="10" height="2" fill="#d98a00"/>
<rect x="131" y="432" width="9" height="2" fill="#d98a00"/>
<rect x="142" y="432" width="8" height="2" fill="#d98a00"/>
<rect x="107" y="440" width="5" height="2" fill="#d98a00"/>
<rect x="114" y="440" width="12" height="2" fill="#d98a00"/>
<rect x="157" y="404" width="2" height="2" fill="#d98a00"/>
<rect x="161" y="404" width="12" height="2" fill="#d98a00"/>
<rect x="175" y="404" width="3" height="2" fill="#d98a00"/>
<rect x="180" y="404" width="4" height="2" fill="#d98a00"/>
<rect x="157" y="410" width="6" height="2" fill="#d98a00"/>
<rect x="157" y="418" width="9" height="2" fill="#d98a00"/>
<rect x="168" y="418" width="11" height="2" fill="#d98a00"/>
<rect x="181" y="418" width="8" height="2" fill="#d98a00"/>
<rect x="157" y="425" width="8" height="2" fill="#d98a00"/>
<rect x="167" y="425" width="11" height="2" fill="#d98a00"/>
<rect x="180" y="425" width="9" height="2" fill="#d98a00"/>
<rect x="191" y="425" width="4" height="2" fill="#d98a00"/>
<rect x="157" y="432" width="2" height="2" fill="#d98a00"/>
<rect x="157" y="447" width="12" height="2" fill="#d98a00"/>
<rect x="171" y="447" width="6" height="2" fill="#d98a00"/>
<rect x="179" y="447" width="8" height="2" fill="#d98a00"/>
<rect x="189" y="447" width="10" height="2" fill="#d98a00"/>
<rect x="208" y="404" width="10" height="2" fill="#d98a00"/>
<rect x="220" y="404" width="11" height="2" fill="#d98a00"/>
<rect x="233" y="404" width="8" height="2" fill="#d98a00"/>
<rect x="208" y="410" width="12" height="2" fill="#d98a00"/>
<rect x="222" y="410" width="2" height="2" fill="#d98a00"/>
<rect x="226" y="410" width="6" height="2" fill="#d98a00"/>
<rect x="208" y="418" width="7" height="2" fill="#d98a00"/>
<rect x="217" y="418" width="10" height="2" fill="#d98a00"/>
<rect x="208" y="425" width="12" height="2" fill="#d98a00"/>
<rect x="208" y="432" width="6" height="2" fill="#d98a00"/>
<rect x="216" y="432" width="3" height="2" fill="#d98a00"/>
<rect x="221" y="432" width="3" height="2" fill="#d98a00"/>
<rect x="208" y="440" width="3" height="2" fill="#d98a00"/>
<rect x="213" y="440" width="7" height="2" fill="#d98a00"/>
<rect x="222" y="440" width="3" height="2" fill="#d98a00"/>
<rect x="227" y="440" width="8" height="2" fill="#d98a00"/>
<rect x="208" y="447" width="6" height="2" fill="#d98a00"/>
<rect x="258" y="404" width="3" height="2" fill="#d98a00"/>
<rect x="263" y="404" width="2" height="2" fill="#d98a00"/>
<rect x="267" y="404" width="11" height="2" fill="#d98a00"/>
<rect x="280" y="404" width="11" height="2" fill="#d98a00"/>
<rect x="258" y="410" width="11" height="2" fill="#d98a00"/>
<rect x="271" y="410" width="7" height="2" fill="#d98a00"/>
<rect x="280" y="410" width="10" height="2" fill="#d98a00"/>
<rect x="292" y="410" width="6" height="2" fill="#d98a00"/>
<rect x="258" y="418" width="6" height="2" fill="#d98a00"/>
<rect x="258" y="440" width="8" height="2" fill="#d98a00"/>
<rect x="268" y="440" width="6" height="2" fill="#d98a00"/>
<rect x="258" y="447" width="2" height="2" fill="#d98a00"/>
<rect x="262" y="447" width="7" height="2" fill="#d98a00"/>
<rect x="330" y="396" width="1" height="3" fill="#d98a00"/>
<rect x="332" y="396" width="1" height="3" fill="#d98a00"/>
<rect x="334" y="396" width="1" height="3" fill="#d98a00"/>
<rect x="336" y="396" width="1" height="3" fill="#d98a00"/>
<rect x="338" y="396" width="1" height="3" fill="#d98a00"/>
<rect x="340" y="396" width="1" height="3" fill="#d98a00"/>
<rect x="342" y="396" width="1" height="3" fill="#d98a00"/>
<rect x="307" y="447" width="2" height="1" fill="#d98a00"/>
<rect x="313" y="447" width="2" height="1" fill="#d98a00"/>
<rect x="319" y="447" width="6" height="1" fill="#d98a00"/>
<rect x="331" y="447" width="7" height="1" fill="#d98a00"/>
<rect x="353" y="444" width="3" height="1" fill="#d98a00"/>
<rect x="362" y="433" width="5" height="1" fill="#d98a00"/>
<rect x="362" y="444" width="7" height="1" fill="#d98a00"/>
<g font-family="Liberation Sans" fill="#ffffff" shape-rendering="auto">
<g fill="none" stroke="#fff" stroke-width="1" stroke-linecap="square">
<path d="M146.5 239.5 L146.5 249.5"/>
<path d="M154.5 243 Q153 242 151.8 242.5 Q150 243 150.2 244.5 Q150.5 245.6 152.5 246 Q155 246.6 154.8 248.3 Q154.4 249.6 152.3 249.6 Q150.8 249.6 150 248.8"/>
<ellipse cx="160.4" cy="246" rx="3.4" ry="3.7"/>
<path d="M256.5 249.5 L259.6 239.5 L262.2 239.5 L265.5 249.5 M257.7 246.2 L264.3 246.2"/>
<path d="M267.5 242.5 L272 249.5 M272 242.5 L267.5 249.5"/>
<ellipse cx="277.6" cy="246" rx="3.4" ry="3.7"/>
<path d="M197 353.5 L204 353.5 M200.5 353.5 L200.5 363.5"/>
<ellipse cx="208.3" cy="360" rx="3.4" ry="3.7"/>
<path d="M214.5 356.5 L214.5 366.5"/>
<ellipse cx="217.8" cy="360" rx="3.3" ry="3.7"/>
<path d="M223.5 355.5 L226.5 353.5 L226.5 363.5 M223.5 363.5 L229.5 363.5"/>
</g>
<rect x="22.5" y="421.5" width="12" height="12" fill="none" stroke="#fff" stroke-width="1"/>
<path d="M23.5 433 Q25 426 33.5 423.5 M27 433 Q28 428 33.5 426.5" fill="none" stroke="#fff" stroke-width="1.2"/>
<path d="M45.5,425.5 Q44.5,424.5 43.0,424.5 Q39.5,424.5 39.5,428.25 Q39.5,432 43.0,432 Q44.5,432 45.5,431 M47,432 L50.5,424.5 L54,432 M48.8,429.5 L52.2,429.5 M56,424.5 L56,432 L58.5,432 Q62.5,432 62.5,428.25 Q62.5,424.5 58.5,424.5 Z M64.5,432 L64.5,424.5 L68.5,429 L72.5,424.5 L72.5,432 M74.5,432 L78.0,424.5 L81.5,432 M76.3,429.5 L79.7,429.5 M82.5,424.5 L88.5,424.5 M85.5,424.5 L85.5,432 M90.5,424.5 L90.5,432 M98.5,425.5 Q97.5,424.5 96.0,424.5 Q92.5,424.5 92.5,428.25 Q92.5,432 96.0,432 Q97.5,432 98.5,431" fill="none" stroke="#fff" stroke-width="3" stroke-linejoin="bevel"/>
<path d="M45.5,425.5 Q44.5,424.5 43.0,424.5 Q39.5,424.5 39.5,428.25 Q39.5,432 43.0,432 Q44.5,432 45.5,431 M47,432 L50.5,424.5 L54,432 M48.8,429.5 L52.2,429.5 M56,424.5 L56,432 L58.5,432 Q62.5,432 62.5,428.25 Q62.5,424.5 58.5,424.5 Z M64.5,432 L64.5,424.5 L68.5,429 L72.5,424.5 L72.5,432 M74.5,432 L78.0,424.5 L81.5,432 M76.3,429.5 L79.7,429.5 M82.5,424.5 L88.5,424.5 M85.5,424.5 L85.5,432 M90.5,424.5 L90.5,432 M98.5,425.5 Q97.5,424.5 96.0,424.5 Q92.5,424.5 92.5,428.25 Q92.5,432 96.0,432 Q97.5,432 98.5,431" fill="none" stroke="#000" stroke-width="1" stroke-linejoin="bevel"/>
</g>
<rect x="62" y="435" width="2" height="2" fill="#ffffff"/>
<rect x="65" y="435" width="2" height="2" fill="#ffffff"/>
<rect x="68" y="435" width="2" height="2" fill="#ffffff"/>
<rect x="71" y="435" width="2" height="2" fill="#ffffff"/>
<rect x="74" y="435" width="2" height="2" fill="#ffffff"/>
<rect x="77" y="435" width="2" height="2" fill="#ffffff"/>
<rect x="80" y="435" width="2" height="2" fill="#ffffff"/>
<rect x="83" y="435" width="2" height="2" fill="#ffffff"/>
<rect x="86" y="435" width="2" height="2" fill="#ffffff"/>
<rect x="89" y="435" width="2" height="2" fill="#ffffff"/>
<rect x="92" y="435" width="2" height="2" fill="#ffffff"/>
<rect x="95" y="435" width="2" height="2" fill="#ffffff"/>
</svg>

<!-- main dialog -->
<div id="md" class="a" style="left:342px;top:75px;width:671px;height:355px;background:#f0f0f0;background-clip:padding-box;border:1px solid rgba(20,30,50,0.4);box-shadow:1px 2px 10px rgba(0,0,0,0.22)">
  <div class="a" style="left:0;top:0;width:669px;height:30px;background:#fff"></div>
</div>
<div class="t" style="left:351px;top:84px;color:#9a9a9a">Spool Drawing Views</div>
<svg class="a" style="left:991px;top:84px" width="14" height="14" viewBox="0 0 14 14"><path d="M1 1 L11 11 M11 1 L1 11" stroke="#888" stroke-width="1"/></svg>
<div class="t" style="left:349px;top:113px">Current views:</div>

<!-- list view -->
<div id="lv" class="a" style="left:350px;top:133px;width:558px;height:260px;background:#fff;border:1px solid #828790"></div>
<div class="a" style="left:356px;top:159px;width:549px;height:19px;background:#ebebeb"></div>
<div class="a" style="left:421px;top:135px;width:1px;height:24px;background:#e5e5e5"></div>
<div class="a" style="left:459px;top:135px;width:1px;height:24px;background:#e5e5e5"></div>
<div class="a" style="left:489px;top:135px;width:1px;height:24px;background:#e5e5e5"></div>
<div class="a" style="left:519px;top:135px;width:1px;height:24px;background:#e5e5e5"></div>
<div class="a" style="left:563px;top:135px;width:1px;height:24px;background:#e5e5e5"></div>
<div class="a" style="left:611px;top:135px;width:1px;height:24px;background:#e5e5e5"></div>
<div class="a" style="left:671px;top:135px;width:1px;height:24px;background:#e5e5e5"></div>
<div class="a" style="left:709px;top:135px;width:1px;height:24px;background:#e5e5e5"></div>
<div class="a" style="left:807px;top:135px;width:1px;height:24px;background:#e5e5e5"></div>
<div class="t" style="left:358px;top:140px">View name</div>
<div class="t" style="left:428px;top:140px">Type</div>
<div class="t" style="left:466px;top:140px">X</div>
<div class="t" style="left:496px;top:140px">Y</div>
<div class="t" style="left:526px;top:140px">Width</div>
<div class="t" style="left:570px;top:140px">Height</div>
<div class="t" style="left:618px;top:140px">Direction</div>
<div class="t" style="left:678px;top:140px">Page</div>
<div class="t" style="left:716px;top:140px">View area (WxH)</div>
<div class="t" style="left:814px;top:140px">Sheet</div>
<div class="t" style="left:358px;top:162px">Top1</div>
<div class="t" style="left:428px;top:162px">PM</div>
<div class="t" style="left:466px;top:162px">0</div>
<div class="t" style="left:496px;top:162px">0</div>
<div class="t" style="left:526px;top:162px">277</div>
<div class="t" style="left:570px;top:162px">133</div>
<div class="t" style="left:618px;top:162px">Top</div>
<div class="t" style="left:678px;top:162px">1</div>
<div class="t" style="left:716px;top:162px">277x267</div>
<div class="t" style="left:814px;top:162px">Cadmatic_spool</div>
<div class="t" style="left:358px;top:181px">Axo</div>
<div class="t" style="left:428px;top:181px">PM</div>
<div class="t" style="left:466px;top:181px">136</div>
<div class="t" style="left:496px;top:181px">136</div>
<div class="t" style="left:526px;top:181px">136</div>
<div class="t" style="left:570px;top:181px">130</div>
<div class="t" style="left:618px;top:181px">Axo</div>
<div class="t" style="left:678px;top:181px">1</div>
<div class="t" style="left:716px;top:181px">277x267</div>
<div class="t" style="left:814px;top:181px">Cadmatic_spool</div>
<div class="t" style="left:358px;top:200px">Iso</div>
<div class="t" style="left:428px;top:200px">Pipe</div>
<div class="t" style="left:466px;top:200px">0</div>
<div class="t" style="left:496px;top:200px">136</div>
<div class="t" style="left:526px;top:200px">136</div>
<div class="t" style="left:570px;top:200px">130</div>
<div class="t" style="left:618px;top:200px">Iso</div>
<div class="t" style="left:678px;top:200px">1</div>
<div class="t" style="left:716px;top:200px">277x267</div>
<div class="t" style="left:814px;top:200px">Cadmatic_spool</div>

<!-- right buttons -->
<div class="t" style="left:914px;top:145px">Pages</div>
<div class="a" style="left:951px;top:151px;width:54px;height:1px;background:#b9b9b9"></div>
<div class="tb" style="left:921px;top:165px;width:37px;height:24px;padding-left:4px;line-height:22px">1</div>
<svg class="a" style="left:944px;top:174px" width="10" height="7" viewBox="0 0 10 7"><path d="M0.5 1 L4.5 5 L8.5 1" fill="none" stroke="#333" stroke-width="1"/></svg>
<div class="t" style="left:963px;top:166px">/ 1</div>
<div class="btn" style="left:922px;top:192px;width:83px;height:22px">Add...</div>
<div class="btn" style="left:922px;top:218px;width:83px;height:22px">Edit...</div>
<div class="btn" style="left:922px;top:244px;width:83px;height:22px;background:#cccccc;border-color:#bfbfbf;color:#838383">Remove</div>
<div class="t" style="left:914px;top:275px">Views</div>
<div class="a" style="left:950px;top:281px;width:55px;height:1px;background:#b9b9b9"></div>
<div class="btn" style="left:922px;top:296px;width:83px;height:22px">Add...</div>
<div class="btn" style="left:922px;top:322px;width:83px;height:22px;background:#e5f1fb;border-color:#0078d7">Edit...</div>
<div class="btn" style="left:922px;top:348px;width:83px;height:22px">Remove</div>
<div class="btn" style="left:733px;top:400px;width:83px;height:22px">OK</div>
<div class="btn" style="left:824px;top:400px;width:83px;height:22px">Cancel</div>
<div class="btn" style="left:915px;top:400px;width:83px;height:22px">Help</div>

<!-- inner dialog -->
<div id="id" class="a" style="left:373px;top:216px;width:324px;height:298px;background:#f0f0f0;border:1px solid #1883d7;box-shadow:3px 4px 18px rgba(0,0,0,0.38)">
  <div class="a" style="left:0;top:0;width:322px;height:25px;background:#fff"></div>
</div>
<div class="t" style="left:377px;top:222px">Spool Drawings Views</div>
<svg class="a" style="left:674px;top:222px" width="14" height="14" viewBox="0 0 14 14"><path d="M1.5 1.5 L12.5 12.5 M12.5 1.5 L1.5 12.5" stroke="#000" stroke-width="1.1"/></svg>
<div class="t" style="left:380px;top:249px">View area (WxH):</div>
<div class="t" style="left:520px;top:249px">(277x267)</div>
<div class="t" style="left:380px;top:276px;color:#a3a3a3">View name:</div>
<div class="a" style="left:464px;top:274px;width:153px;height:24px;background:#f0f0f0;border:1px solid #cccccc"></div>
<div class="t" style="left:470px;top:278px;color:#6d6d6d">Top1</div>
<div class="t" style="left:380px;top:301px">View type:</div>
<div class="a" style="left:464px;top:300px;width:108px;height:24px;background:#fff;border:1px solid #7a7a7a"></div>
<div class="t" style="left:468px;top:305px">Plant Modeller</div>
<svg class="a" style="left:558px;top:310px" width="10" height="6" viewBox="0 0 10 6"><path d="M0.5 0.5 L4.5 4.5 L8.5 0.5" fill="none" stroke="#333" stroke-width="1"/></svg>
<div class="a" style="left:380px;top:331px;width:13px;height:13px;border:1px solid #333;background:#fff"></div>
<svg class="a" style="left:380px;top:331px" width="13" height="13" viewBox="0 0 13 13"><path d="M2.5 6.5 L5 9.2 L10.5 3" fill="none" stroke="#222" stroke-width="1.2"/></svg>
<div class="t" style="left:396px;top:331px">Annotate view</div>
<div class="a" style="left:380px;top:357px;width:13px;height:13px;border:1px solid #333;background:#fff"></div>
<svg class="a" style="left:380px;top:357px" width="13" height="13" viewBox="0 0 13 13"><path d="M2.5 6.5 L5 9.2 L10.5 3" fill="none" stroke="#222" stroke-width="1.2"/></svg>
<div class="t" style="left:396px;top:357px">View direction relative to assembly table</div>
<div class="t" style="left:380px;top:379px">View direction:</div>
<div class="a" style="left:464px;top:378px;width:59px;height:24px;background:#fff;border:1px solid #7a7a7a"></div>
<div class="t" style="left:469px;top:383px">Top</div>
<svg class="a" style="left:510px;top:388px" width="10" height="6" viewBox="0 0 10 6"><path d="M0.5 0.5 L4.5 4.5 L8.5 0.5" fill="none" stroke="#333" stroke-width="1"/></svg>
<div class="t" style="left:380px;top:405px">View location:</div>
<div class="a" style="left:464px;top:404px;width:76px;height:24px;background:#fff;border:1px solid #7a7a7a"></div>
<div class="t" style="left:470px;top:409px">0</div>
<div class="a" style="left:541px;top:404px;width:76px;height:24px;background:#fff;border:1px solid #171717"></div>
<div class="t" style="left:547px;top:409px">0</div>
<div class="t" style="left:380px;top:431px">View size:</div>
<div class="a" style="left:464px;top:430px;width:76px;height:24px;background:#fff;border:1px solid #0078d7"></div>
<div class="t" style="left:470px;top:434px">272</div>
<div class="a" style="left:490px;top:433px;width:1px;height:15px;background:#000"></div>
<div class="a" style="left:541px;top:430px;width:76px;height:24px;background:#fff;border:1px solid #7a7a7a"></div>
<div class="t" style="left:547px;top:434px">133</div>
<div class="btn" style="left:444px;top:484px;width:83px;height:22px;border:2px solid #0078d7;line-height:19px">OK</div>
<div class="btn" style="left:535px;top:484px;width:83px;height:22px">Cancel</div>

</body></html>
